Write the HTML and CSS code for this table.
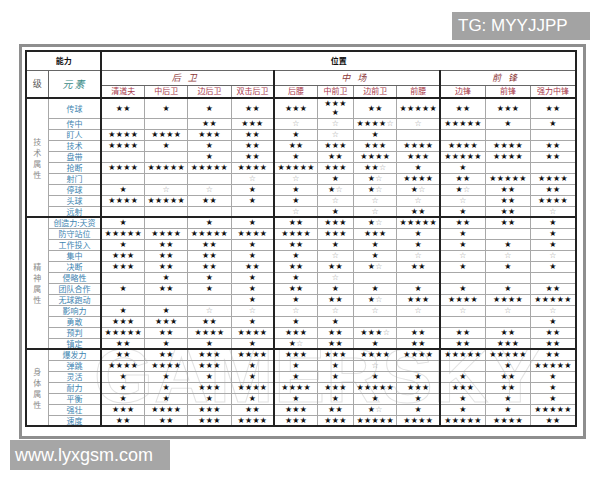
FILE: index.html
```html
<!DOCTYPE html>
<html lang="zh">
<head>
<meta charset="utf-8">
<title>位置能力表</title>
<link rel="stylesheet" href="styles.css">
</head>
<body>
<div class="page">
  <div class="tg">TG: MYYJJPP</div>
  <div class="frame">
    <div class="watermark">GAMERSKY</div>
    <table class="grid">
      <colgroup>
        <col class="w-lv"><col class="w-el">
        <col class="w-a g"><col class="w-a"><col class="w-a"><col class="w-a">
        <col class="w-a g"><col class="w-n"><col class="w-a"><col class="w-a">
        <col class="w-f g"><col class="w-f"><col class="w-f">
      </colgroup>
      <thead>
        <tr class="h1"><th colspan="2" class="bold">能力</th><th colspan="11" class="bold">位置</th></tr>
        <tr class="h2"><th rowspan="2" class="lv">级</th><th rowspan="2" class="elh">元素</th><th colspan="4" class="grpname">后卫</th><th colspan="4" class="grpname">中场</th><th colspan="3" class="grpname">前锋</th></tr>
        <tr class="h3"><th class="sub">清道夫</th><th class="sub">中后卫</th><th class="sub">边后卫</th><th class="sub">双击后卫</th><th class="sub">后腰</th><th class="sub">中前卫</th><th class="sub">边前卫</th><th class="sub">前腰</th><th class="sub">边锋</th><th class="sub">前锋</th><th class="sub">强力中锋</th></tr>
      </thead>
      <tbody>
        <tr class="tall"><td rowspan="10" class="cat">技<br>术<br>属<br>性</td><td class="el">传球</td><td>★★</td><td>★</td><td>★</td><td>★★</td><td>★★★</td><td>★★★<br>★</td><td>★★</td><td>★★★★★</td><td>★★</td><td>★★★</td><td>★★</td></tr>
        <tr><td class="el">传中</td><td></td><td></td><td>★★</td><td>★★★</td><td><i>☆</i></td><td><i>☆</i></td><td>★★★★<i>☆</i></td><td><i>☆</i></td><td>★★★★★</td><td>★</td><td>★</td></tr>
        <tr><td class="el">盯人</td><td>★★★★</td><td>★★★★</td><td>★★★</td><td>★★</td><td>★</td><td><i>☆</i></td><td>★</td><td></td><td></td><td></td><td></td></tr>
        <tr><td class="el">技术</td><td>★★★★</td><td>★</td><td>★</td><td>★★</td><td>★★</td><td>★★★</td><td>★★★</td><td>★★★★</td><td>★★★★</td><td>★★★★</td><td>★★</td></tr>
        <tr><td class="el">盘带</td><td></td><td></td><td>★</td><td>★★</td><td>★</td><td>★★</td><td>★★★★</td><td>★★★</td><td>★★★★★</td><td>★★★★</td><td>★★</td></tr>
        <tr><td class="el">抢断</td><td>★★★★</td><td>★★★★★</td><td>★★★★★</td><td>★★★★</td><td>★★★★★</td><td>★★★</td><td>★★<i>☆</i></td><td>★</td><td>★</td><td></td><td></td></tr>
        <tr><td class="el">射门</td><td></td><td></td><td></td><td><i>☆</i></td><td><i>☆</i></td><td>★</td><td>★<i>☆</i></td><td>★★★★</td><td>★★</td><td>★★★★★</td><td>★★★★</td></tr>
        <tr><td class="el">停球</td><td>★</td><td><i>☆</i></td><td><i>☆</i></td><td>★</td><td>★</td><td>★<i>☆</i></td><td>★<i>☆</i></td><td>★<i>☆</i></td><td>★<i>☆</i></td><td>★★</td><td>★★</td></tr>
        <tr><td class="el">头球</td><td>★★★★</td><td>★★★★★</td><td>★★</td><td>★</td><td>★</td><td><i>☆</i></td><td><i>☆</i></td><td><i>☆</i></td><td><i>☆</i></td><td>★★</td><td>★★★★</td></tr>
        <tr><td class="el">远射</td><td></td><td></td><td></td><td></td><td><i>☆</i></td><td>★</td><td><i>☆</i></td><td>★★</td><td>★</td><td>★★</td><td><i>☆</i></td></tr>
      </tbody>
      <tbody>
        <tr><td rowspan="12" class="cat">精<br>神<br>属<br>性</td><td class="el">创造力:天资</td><td>★</td><td></td><td>★</td><td>★</td><td>★★</td><td>★★★</td><td>★<i>☆</i></td><td>★★★★★</td><td>★★</td><td>★★</td><td>★</td></tr>
        <tr><td class="el">防守站位</td><td>★★★★★</td><td>★★★★</td><td>★★★★★</td><td>★★★★</td><td>★★★★</td><td>★★★</td><td>★★★</td><td>★</td><td>★</td><td></td><td>★</td></tr>
        <tr><td class="el">工作投入</td><td>★</td><td>★★</td><td>★★</td><td>★</td><td>★★</td><td>★</td><td>★</td><td>★</td><td>★</td><td>★</td><td>★</td></tr>
        <tr><td class="el">集中</td><td>★★★</td><td>★★</td><td>★★</td><td>★</td><td>★</td><td><i>☆</i></td><td>★</td><td><i>☆</i></td><td><i>☆</i></td><td><i>☆</i></td><td><i>☆</i></td></tr>
        <tr><td class="el">决断</td><td>★★★</td><td>★★</td><td>★★</td><td>★★</td><td>★★</td><td>★★</td><td>★<i>☆</i></td><td>★★</td><td>★</td><td>★</td><td>★</td></tr>
        <tr><td class="el">侵略性</td><td></td><td>★</td><td>★</td><td>★</td><td>★</td><td><i>☆</i></td><td></td><td></td><td></td><td></td><td></td></tr>
        <tr><td class="el">团队合作</td><td>★</td><td>★★</td><td>★</td><td>★</td><td>★★</td><td>★</td><td>★</td><td>★</td><td>★</td><td>★</td><td>★★</td></tr>
        <tr><td class="el">无球跑动</td><td></td><td></td><td></td><td>★</td><td>★</td><td>★★</td><td>★<i>☆</i></td><td>★★★</td><td>★★★★</td><td>★★★★</td><td>★★★★★</td></tr>
        <tr><td class="el">影响力</td><td>★</td><td>★</td><td><i>☆</i></td><td><i>☆</i></td><td><i>☆</i></td><td><i>☆</i></td><td><i>☆</i></td><td><i>☆</i></td><td><i>☆</i></td><td><i>☆</i></td><td><i>☆</i></td></tr>
        <tr><td class="el">勇敢</td><td>★★★</td><td>★★★</td><td>★★</td><td>★</td><td>★</td><td>★</td><td></td><td></td><td></td><td></td><td>★</td></tr>
        <tr><td class="el">预判</td><td>★★★★★</td><td>★★</td><td>★★★★</td><td>★★★★</td><td>★★★</td><td>★★</td><td>★★★<i>☆</i></td><td>★★</td><td>★★</td><td>★★</td><td>★★</td></tr>
        <tr><td class="el">镇定</td><td>★★</td><td>★</td><td>★</td><td>★</td><td>★<i>☆</i></td><td>★★</td><td>★</td><td>★★</td><td>★★</td><td>★★★</td><td>★★</td></tr>
      </tbody>
      <tbody>
        <tr><td rowspan="7" class="cat">身<br>体<br>属<br>性</td><td class="el">爆发力</td><td>★★</td><td>★★</td><td>★★★</td><td>★★★★</td><td>★★★</td><td>★★★</td><td>★★★★</td><td>★★★★</td><td>★★★★★</td><td>★★★★★</td><td>★★</td></tr>
        <tr><td class="el">弹跳</td><td>★★★★</td><td>★★★★</td><td>★★★</td><td>★</td><td>★</td><td>★</td><td><i>☆</i></td><td></td><td></td><td>★</td><td>★★★★★</td></tr>
        <tr><td class="el">灵活</td><td>★</td><td>★</td><td>★</td><td>★</td><td>★</td><td>★</td><td>★</td><td>★</td><td>★</td><td>★★</td><td>★</td></tr>
        <tr><td class="el">耐力</td><td>★</td><td>★</td><td>★★★</td><td>★★★★</td><td>★★★★</td><td>★★★</td><td>★★★★★</td><td>★★★</td><td>★★★</td><td>★★</td><td>★</td></tr>
        <tr><td class="el">平衡</td><td>★</td><td>★</td><td>★</td><td>★</td><td>★</td><td>★</td><td>★</td><td>★</td><td>★</td><td>★</td><td>★</td></tr>
        <tr><td class="el">强壮</td><td>★★★</td><td>★★★★</td><td>★★★</td><td>★★</td><td>★★★</td><td>★★</td><td>★<i>☆</i></td><td>★</td><td>★</td><td>★</td><td>★★★★★</td></tr>
        <tr><td class="el">速度</td><td>★★</td><td>★★</td><td>★★★</td><td>★★★★</td><td>★★★</td><td>★★★</td><td>★★★★★</td><td>★★★★</td><td>★★★★★</td><td>★★★★</td><td>★★</td></tr>
      </tbody>
    </table>
  </div>
  <div class="www">www.lyxgsm.com</div>
</div>
</body>
</html>
```
FILE: styles.css
```css
html, body {
  margin: 0;
  padding: 0;
  background: #ffffff;
}
.page {
  width: 600px;
  height: 480px;
  padding-top: 12px;
  box-sizing: border-box;
  font-family: "Noto Sans CJK SC", "DejaVu Sans", sans-serif;
}
.tg {
  margin-left: 452px;
  width: 138px;
  height: 28px;
  box-sizing: border-box;
  padding-left: 6px;
  background: #a3a3a3;
  color: #ffffff;
  font-family: "Liberation Sans", Arial, sans-serif;
  font-size: 17px;
  line-height: 28px;
}
.frame {
  position: relative;
  margin: 4px 0 0 19px;
  width: 567px;
  height: 395px;
  box-sizing: border-box;
  border: 3px solid #8e8e8e;
  padding: 3px 6px 0 3px;
  background: #fff;
}
.www {
  margin: 1px 0 0 10px;
  width: 160px;
  height: 30px;
  box-sizing: border-box;
  padding-left: 5px;
  background: #a6a6a6;
  color: #ffffff;
  font-family: "Liberation Sans", Arial, sans-serif;
  font-size: 18px;
  line-height: 30px;
}
.grid {
  position: relative;
  width: 552px;
  table-layout: fixed;
  border-collapse: collapse;
  border: 2px solid #222;
}
.w-lv { width: 22px; }
.w-el { width: 53px; }
.w-a { width: 43px; }
.w-n { width: 36px; }
.w-f { width: 45px; }
col.g { border-left: 2px solid #222; }
.grid th, .grid td {
  padding: 0;
  text-align: center;
  vertical-align: middle;
  white-space: nowrap;
  overflow: hidden;
  border: 1px solid #a8a8a8;
}
.grid th {
  font-weight: normal;
  border-color: #666;
}
.grid td {
  font-family: "DejaVu Sans", sans-serif;
  font-size: 8px;
  line-height: 9px;
  letter-spacing: 0.3px;
  color: #111;
}
.grid td i {
  font-style: normal;
  color: #9a9a9a;
}
.grid tbody {
  border-top: 2px solid #222;
}
.h1 { height: 19px; }
.h2 { height: 15px; }
.h3 { height: 13px; }
.grid tbody tr { height: 11px; }
.grid tbody tr.tall { height: 20px; }
.bold {
  font-size: 8px;
  font-weight: bold !important;
  color: #111;
  line-height: 10px;
}
.lv {
  font-size: 9px;
  color: #555;
  line-height: 10px;
}
.elh {
  font-size: 10px;
  color: #3a8a86;
  font-style: italic;
  line-height: 10px;
  letter-spacing: 2px;
}
.grpname {
  font-size: 9px;
  color: #8e3a3a;
  font-style: italic;
  letter-spacing: 7px;
  line-height: 10px;
}
.sub {
  font-size: 8px;
  color: #a8384a;
  line-height: 10px;
  border-color: #888 !important;
}
.grid td.el {
  font-family: "Noto Sans CJK SC", sans-serif;
  font-size: 8px;
  color: #3d84b0;
  letter-spacing: 0;
}
.grid td.cat {
  font-family: "Noto Sans CJK SC", sans-serif;
  font-size: 8px;
  line-height: 11px;
  color: #8a8a8a;
  white-space: normal;
}
.watermark {
  position: absolute;
  left: 72px;
  top: 286px;
  font-family: "Liberation Sans", Arial, sans-serif;
  font-weight: bold;
  font-size: 76px;
  letter-spacing: 1px;
  line-height: 86px;
  color: transparent;
  -webkit-text-stroke: 1px rgba(150, 150, 150, 0.28);
  pointer-events: none;
}
```
